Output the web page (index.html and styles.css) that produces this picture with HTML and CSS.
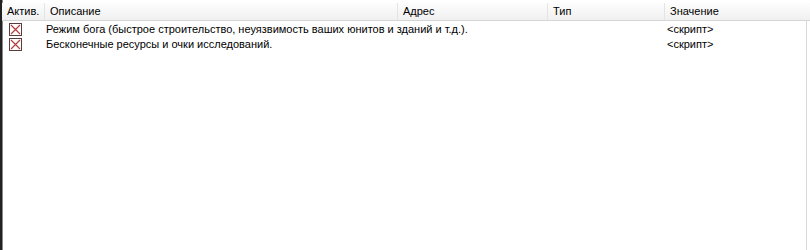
FILE: index.html
```html
<!DOCTYPE html>
<html lang="ru">
<head>
  <meta charset="UTF-8" />
  <title>Читы</title>
  <link rel="stylesheet" href="styles.css">
</head>
<body>
  <div class="list">
    <div class="header">
      <div class="col col-active">Актив.</div>
      <div class="col col-desc">Описание</div>
      <div class="col col-addr">Адрес</div>
      <div class="col col-type">Тип</div>
      <div class="col col-value">Значение</div>
    </div>

    <div class="rows">
      <div class="row">
        <div class="cell col-active">
          <svg class="box" width="13" height="13" viewBox="0 0 13 13" shape-rendering="crispEdges">
            <rect x="0.5" y="0.5" width="12" height="12" fill="#fff" stroke="#5a3c3c" />
            <path d="M2 2 L11 11 M11 2 L2 11" stroke="#b83a3a" stroke-width="1.2" shape-rendering="auto" />
          </svg>
        </div>
        <div class="cell col-desc">Режим бога (быстрое строительство, неуязвимость ваших юнитов и зданий и т.д.).</div>
        <div class="cell col-addr"></div>
        <div class="cell col-type"></div>
        <div class="cell col-value">&lt;скрипт&gt;</div>
      </div>
      <div class="row">
        <div class="cell col-active">
          <svg class="box" width="13" height="13" viewBox="0 0 13 13" shape-rendering="crispEdges">
            <rect x="0.5" y="0.5" width="12" height="12" fill="#fff" stroke="#5a3c3c" />
            <path d="M2 2 L11 11 M11 2 L2 11" stroke="#b83a3a" stroke-width="1.2" shape-rendering="auto" />
          </svg>
        </div>
        <div class="cell col-desc">Бесконечные ресурсы и очки исследований.</div>
        <div class="cell col-addr"></div>
        <div class="cell col-type"></div>
        <div class="cell col-value">&lt;скрипт&gt;</div>
      </div>
    </div>
  </div>
</body>
</html>
```

FILE: styles.css
```css
body {
  margin: 0;
  padding: 0;
  background: #fff;
  font-family: "Liberation Sans", Arial, sans-serif;
  font-size: 11px;
  color: #000;
}

.list {
  height: 250px;
  border-left: 2px solid #222;
  box-shadow: inset 1px 0 0 #888;
  padding-top: 3px;
  box-sizing: border-box;
  position: relative;
}

.list::after {
  content: "";
  position: absolute;
  right: 3px;
  top: 21px;
  bottom: 0;
  width: 1px;
  background: #d8d8d8;
}

.header {
  display: flex;
  height: 17px;
  background: linear-gradient(#fdfdfd, #f0f0f0);
  border-bottom: 1px solid #d5d5d5;
}

.header .col {
  line-height: 17px;
  padding-left: 5px;
  border-right: 1px solid #e4e4e4;
  box-sizing: border-box;
  white-space: nowrap;
  overflow: hidden;
}

.header .col-active {
  padding-left: 5px;
}

.col-active { width: 43px; }
.col-desc { width: 353px; }
.col-addr { width: 150px; }
.col-type { width: 117px; }
.col-value { flex: 1; border-right: none !important; }

.rows {
  padding-top: 1px;
}

.row {
  display: flex;
  height: 15px;
}

.cell {
  line-height: 15px;
  white-space: nowrap;
  box-sizing: border-box;
  padding-left: 1px;
}

.cell.col-active {
  padding-left: 7px;
  padding-top: 1px;
}

.box {
  display: block;
}

.cell.col-value {
  padding-left: 2px;
}
```
